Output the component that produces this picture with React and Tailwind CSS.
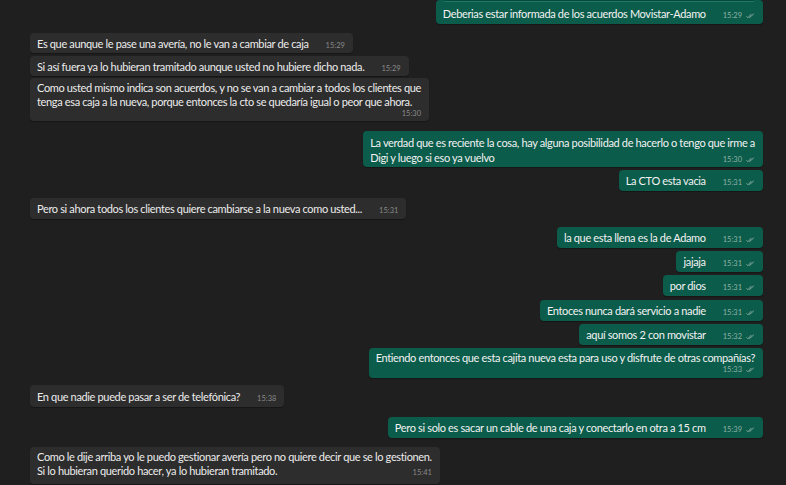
import React from "react";

const msgs = [
  { out: true, mt: 0, quote: true, lines: ["Deberias estar informada de los acuerdos Movistar-Adamo"], t: "15:29" },
  { out: false, mt: 9, pb: 2, lines: ["Es que aunque le pase una avería, no le van a cambiar de caja"], t: "15:29" },
  { out: false, mt: 3, pb: 2, lines: ["Si así fuera ya lo hubieran tramitado aunque usted no hubiere dicho nada."], t: "15:29" },
  { out: false, mt: 2, pt: 3, pb: 2, own: true, lines: ["Como usted mismo indica son acuerdos, y no se van a cambiar a todos los clientes que", "tenga esa caja a la nueva, porque entonces la cto se quedaría igual o peor que ahora."], t: "15:30" },
  { out: true, mt: 10, pt: 4, pb: 2, lh: 15, lines: ["La verdad que es reciente la cosa, hay alguna posibilidad de hacerlo o tengo que irme a", "Digi y luego si eso ya vuelvo"], t: "15:30" },
  { out: true, mt: 3, lines: ["La CTO esta vacia"], t: "15:31" },
  { out: false, mt: 7, lines: ["Pero si ahora todos los clientes quiere cambiarse a la nueva como usted..."], t: "15:31" },
  { out: true, mt: 8, lines: ["la que esta llena es la de Adamo"], t: "15:31" },
  { out: true, mt: 3, lines: ["jajaja"], t: "15:31" },
  { out: true, mt: 3, lines: ["por dios"], t: "15:31" },
  { out: true, mt: 4, lines: ["Entoces nunca dará servicio a nadie"], t: "15:31" },
  { out: true, mt: 3, lines: ["aquí somos 2 con movistar"], t: "15:32" },
  { out: true, mt: 3, pt: 3, pb: 3, own: true, lines: ["Entiendo entonces que esta cajita nueva esta para uso y disfrute de otras compañías?"], t: "15:33" },
  { out: false, mt: 7, pt: 5, pb: 3, lines: ["En que nadie puede pasar a ser de telefónica?"], t: "15:38" },
  { out: true, mt: 10, lines: ["Pero si solo es sacar un cable de una caja y conectarlo en otra a 15 cm"], t: "15:39" },
  { out: false, mt: 9, pt: 3, pb: 6, lines: ["Como le dije arriba yo le puedo gestionar avería pero no quiere decir que se lo gestionen.", "Si lo hubieran querido hacer, ya lo hubieran tramitado."], t: "15:41" },
];

function Checks() {
  return (
    <svg width="9" height="6" viewBox="0 0 9 6" className="ml-[4px] mb-[2px]" fill="none" stroke="#8fb0a6" strokeWidth="0.9">
      <path d="M0.5 3.3 L2 4.8 L5.3 1" />
      <path d="M3.3 4.8 L7.8 0.8" />
    </svg>
  );
}

function Time({ m }) {
  return (
    <span className={`flex items-end shrink-0 text-[7.5px] leading-[10px] tracking-normal ${m.out ? "text-[#8fb0a6]" : "text-[#8a8a8a]"}`}>
      {m.t}
      {m.out && <Checks />}
    </span>
  );
}

function Bubble({ m }) {
  const base = m.out ? "self-end bg-[#0b5c4a] text-[#f2f2f2]" : "self-start bg-[#2d2d2d] text-[#ececec]";
  const last = m.lines.length - 1;
  const lh = { lineHeight: `${m.lh || 14}px` };
  return (
    <div
      className={`${base} rounded-[4px] pl-[7px] pr-[8px] shadow-[0_1px_1px_rgba(0,0,0,0.3)]`}
      style={{ marginTop: m.mt, paddingTop: m.pt ?? 4, paddingBottom: m.pb ?? 3 }}
    >
      {m.quote && <div className="h-[2px] -mt-[4px] mb-[5px] rounded-b-[3px] bg-[#0a4a3d] border-b border-[#1d7a63]" />}
      {m.lines.map((l, i) =>
        i === last && !m.own ? (
          <div key={i} className="flex items-end">
            <span className="whitespace-nowrap pr-[17px]" style={lh}>{l}</span>
            <span className="ml-auto">
              <Time m={m} />
            </span>
          </div>
        ) : (
          <div key={i} className="whitespace-nowrap" style={lh}>{l}</div>
        )
      )}
      {m.own && (
        <div className="flex justify-end">
          <Time m={m} />
        </div>
      )}
    </div>
  );
}

export default function App() {
  return (
    <div
      className="w-[786px] h-[485px] overflow-hidden bg-[#1f1f1f] flex flex-col pl-[30px] pr-[23px] text-[11px] tracking-[-0.35px]"
      style={{ fontFamily: "Lato, 'Noto Sans', sans-serif" }}
    >
      {msgs.map((m, i) => (
        <Bubble key={i} m={m} />
      ))}
    </div>
  );
}
